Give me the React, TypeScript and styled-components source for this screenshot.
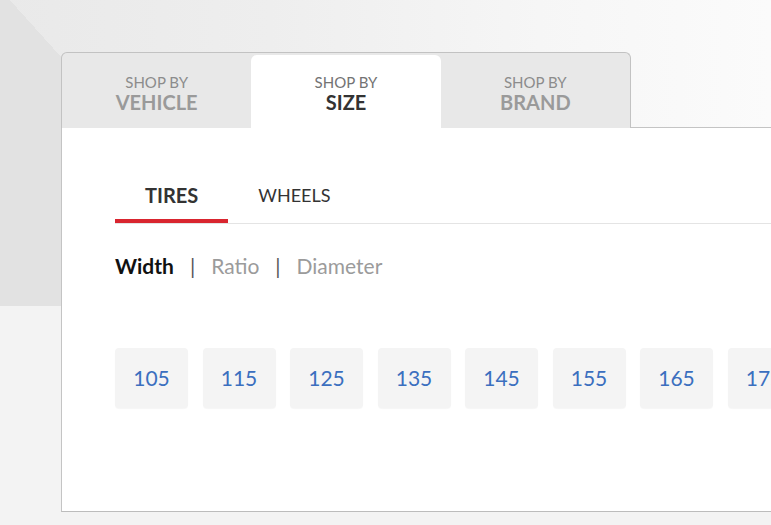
import styled, { createGlobalStyle } from "styled-components";

const GlobalStyle = createGlobalStyle`
  html, body {
    margin: 0;
    padding: 0;
    overflow: hidden;
  }

  body {
    font-family: Lato, "Open Sans", sans-serif;
    background: #f3f3f3;
  }
`;

const Page = styled.div`
  width: 771px;
  height: 525px;
  padding: 52px 0 0 61px;
  box-sizing: border-box;
  overflow: hidden;

  /* hero background: dark diagonal band on the left, soft grey fade to the right */
  background:
    linear-gradient(48deg, #e2e2e2 212px, transparent 212px) 0 0 / 771px 306px no-repeat,
    linear-gradient(90deg, #e9e9e9 0%, #eeeeee 35%, #f6f6f6 70%, #fbfbfb 100%) 0 0 / 771px 306px no-repeat,
    #f3f3f3;
`;

const Finder = styled.section`
  display: flex;
  flex-direction: column;
  width: 900px;
`;

const TabBar = styled.nav`
  position: relative;
  z-index: 1;
  display: flex;
  align-items: flex-end;
  width: 570px;
  height: 76px;
  box-sizing: border-box;
  background: #e8e8e8;
  border: 1px solid #c2c2c2;
  border-bottom: none;
  border-radius: 6px 6px 0 0;
`;

const Tab = styled.button<{ $active?: boolean }>`
  flex: 1;
  display: flex;
  flex-direction: column;
  align-items: center;
  height: ${(p) => (p.$active ? "73px" : "75px")};
  padding: ${(p) => (p.$active ? "18px" : "20px")} 0 0;
  box-sizing: border-box;
  border: none;
  border-radius: ${(p) => (p.$active ? "6px 6px 0 0" : "0")};
  background: ${(p) => (p.$active ? "#ffffff" : "transparent")};
  font-family: inherit;
  cursor: pointer;
`;

const TabSmall = styled.span<{ $active?: boolean }>`
  font-size: 15px;
  line-height: 18px;
  font-weight: 400;
  text-transform: uppercase;
  color: ${(p) => (p.$active ? "#737373" : "#8c8c8c")};
`;

const TabBig = styled.span<{ $active?: boolean }>`
  font-size: 20px;
  line-height: 22px;
  font-weight: 700;
  text-transform: uppercase;
  color: ${(p) => (p.$active ? "#333333" : "#9a9a9a")};
`;

const Panel = styled.div`
  margin-top: -1px;
  height: 385px;
  box-sizing: border-box;
  padding: 55px 0 0 53px;
  background: #ffffff;
  border: 1px solid #c4c4c4;
  border-right: none;
  border-bottom-color: #bcbcbc;
`;

const SubTabs = styled.div`
  display: flex;
  border-bottom: 1px solid #e4e4e4;
`;

const SubTab = styled.button<{ $active?: boolean }>`
  padding: 0 30px 12px;
  border: none;
  border-bottom: 4px solid ${(p) => (p.$active ? "#d9252f" : "transparent")};
  background: none;
  font-family: inherit;
  font-size: ${(p) => (p.$active ? "20px" : "18px")};
  line-height: 24px;
  font-weight: ${(p) => (p.$active ? 700 : 400)};
  color: #333333;
  text-transform: uppercase;
  cursor: pointer;
`;

const Steps = styled.div`
  display: flex;
  align-items: center;
  margin-top: 29px;
  font-size: 21px;
  line-height: 26px;
`;

const Step = styled.span<{ $active?: boolean }>`
  font-weight: ${(p) => (p.$active ? 700 : 400)};
  color: ${(p) => (p.$active ? "#111111" : "#9b9b9b")};
`;

const Divider = styled.span`
  margin: 0 16px;
  color: #555555;
  font-weight: 400;
`;

const Sizes = styled.div`
  display: flex;
  gap: 14.5px;
  margin-top: 69px;
`;

const SizeButton = styled.button`
  flex: none;
  display: flex;
  align-items: center;
  justify-content: center;
  width: 73px;
  height: 60px;
  border: none;
  border-radius: 4px;
  background: #f4f4f4;
  box-shadow: 0 1px 1px rgba(0, 0, 0, 0.04);
  font-family: inherit;
  font-size: 21px;
  line-height: 24px;
  color: #3b6fbf;
  cursor: pointer;
`;

const tabs = [
  { small: "Shop by", big: "Vehicle" },
  { small: "Shop by", big: "Size", active: true },
  { small: "Shop by", big: "Brand" },
];

const widths = ["105", "115", "125", "135", "145", "155", "165", "175", "185"];

export default function App() {
  return (
    <>
      <GlobalStyle />
      <Page>
        <Finder>
          <TabBar>
            {tabs.map((t) => (
              <Tab key={t.big} $active={t.active}>
                <TabSmall $active={t.active}>{t.small}</TabSmall>
                <TabBig $active={t.active}>{t.big}</TabBig>
              </Tab>
            ))}
          </TabBar>
          <Panel>
            <SubTabs>
              <SubTab $active>Tires</SubTab>
              <SubTab>Wheels</SubTab>
            </SubTabs>
            <Steps>
              <Step $active>Width</Step>
              <Divider>|</Divider>
              <Step>Ratio</Step>
              <Divider>|</Divider>
              <Step>Diameter</Step>
            </Steps>
            <Sizes>
              {widths.map((w) => (
                <SizeButton key={w}>{w}</SizeButton>
              ))}
            </Sizes>
          </Panel>
        </Finder>
      </Page>
    </>
  );
}
